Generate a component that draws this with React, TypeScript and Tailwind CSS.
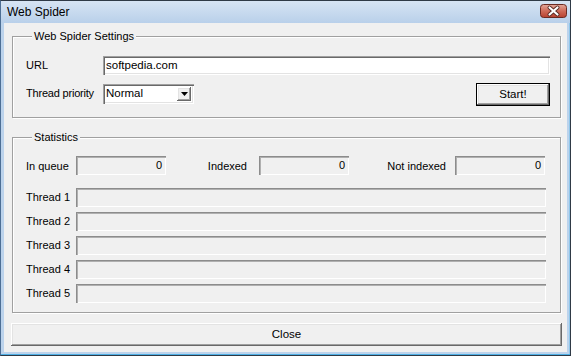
import React from "react";

// classic 3D edges
const raised =
  "shadow-[inset_-1px_-1px_0_#696969,inset_1px_1px_0_#ffffff,inset_-2px_-2px_0_#a0a0a0,inset_2px_2px_0_#e3e3e3]";
const sunken =
  "shadow-[inset_1px_1px_0_#a0a0a0,inset_2px_2px_0_#696969,inset_-1px_-1px_0_#ffffff,inset_-2px_-2px_0_#e3e3e3]";
const statBox =
  "shadow-[inset_1px_1px_0_#8c8c8c,inset_2px_2px_0_#b0b0b0,inset_-1px_-1px_0_#ffffff]";
const group =
  "border border-[#a0a0a0] shadow-[inset_1px_1px_0_#ffffff,1px_1px_0_#ffffff]";

function CloseX() {
  return (
    <svg width="27" height="14" viewBox="0 0 27 14">
      <defs>
        <linearGradient id="cx" x1="0" y1="0" x2="0" y2="1">
          <stop offset="0" stopColor="#e3a99c" />
          <stop offset="0.5" stopColor="#cf6a58" />
          <stop offset="1" stopColor="#b8412f" />
        </linearGradient>
      </defs>
      <rect x="0.5" y="0.5" width="26" height="13" rx="3" fill="url(#cx)" stroke="#6b2a22" />
      <path d="M9.5 3.5 L17.5 10.5 M17.5 3.5 L9.5 10.5" stroke="#5a2a24" strokeWidth="4" strokeLinecap="round" />
      <path d="M9.5 3.5 L17.5 10.5 M17.5 3.5 L9.5 10.5" stroke="#ffffff" strokeWidth="2.2" strokeLinecap="round" />
    </svg>
  );
}

function StatValue({ className }: { className: string }) {
  return (
    <div className={`${statBox} ${className} h-[19px] bg-[#f0f0f0] flex items-center justify-end pr-[4px]`}>
      0
    </div>
  );
}

export default function App() {
  const threads = [1, 2, 3, 4, 5];

  return (
    <div className="w-[572px] h-[357px] bg-white font-['Liberation_Sans',Arial,sans-serif] text-[11px] text-black leading-none">
      <div className="w-[571px] h-[356px] border border-[#2f3a46] border-l-[#4d6f95] flex flex-col">
        {/* title bar */}
        <div className="h-[22px] flex items-center justify-between pl-[6px] pr-[3px] bg-gradient-to-b from-[#d6e4f3] to-[#b9d0ea]">
          <span className="text-[12px]">Web Spider</span>
          <div className="mt-[-2px]">
            <CloseX />
          </div>
        </div>

        {/* frame + client */}
        <div className="flex-1 px-[3px] pb-[3px] bg-[#bcd3ec] shadow-[inset_0_-1px_0_#4fb0e5,inset_-1px_0_0_#8fc6ea]">
          <div className="h-full bg-[#f0f0f0] pl-[8px] pt-[7px]">
            <fieldset className={`${group} w-[549px] pl-[13px] pr-[10px] pb-[11px]`}>
              <legend className="ml-[6px] px-[2px] bg-[#f0f0f0] leading-[13px]">Web Spider Settings</legend>
              <div className="mt-[13px] flex items-center">
                <span className="w-[77px]">URL</span>
                <div className={`${sunken} w-[447px] h-[19px] bg-white flex items-center pl-[3px] text-[11.5px]`}>
                  softpedia.com
                </div>
              </div>
              <div className="mt-[8px] flex items-start">
                <div className="flex items-center h-[21px]">
                  <span className="w-[77px] tracking-[-0.2px]">Thread priority</span>
                  <div className={`${sunken} w-[91px] h-[20px] bg-white flex items-center justify-between pl-[3px] pr-[3px] text-[11.5px]`}>
                    <span>Normal</span>
                    <div className={`${raised} w-[14px] h-[14px] bg-[#f0f0f0] flex items-center justify-center`}>
                      <svg width="7" height="4" viewBox="0 0 7 4">
                        <path d="M0 0 H7 L3.5 4 Z" fill="#000" />
                      </svg>
                    </div>
                  </div>
                </div>
                <button
                  className={`ml-auto w-[74px] h-[23px] border border-black bg-[#f0f0f0] ${raised} flex items-center justify-center text-[11.5px]`}
                >
                  Start!
                </button>
              </div>
            </fieldset>

            <fieldset className={`${group} w-[549px] mt-[13px] pl-[13px] pr-[10px] pb-[9px]`}>
              <legend className="ml-[6px] px-[2px] bg-[#f0f0f0] leading-[13px]">Statistics</legend>
              <div className="mt-[12px] flex items-center">
                <span className="w-[50px] pt-[1px]">In queue</span>
                <StatValue className="w-[90px]" />
                <span className="w-[93px] text-right pr-[12px] pt-[1px]">Indexed</span>
                <StatValue className="w-[90px]" />
                <span className="w-[106px] text-right pr-[9px] pt-[1px]">Not indexed</span>
                <StatValue className="w-[90px]" />
              </div>
              <div className="mt-[13px] flex flex-col gap-[5px]">
                {threads.map((t) => (
                  <div key={t} className="flex items-center">
                    <span className="w-[50px]">Thread {t}</span>
                    <div className={`${statBox} w-[470px] h-[19px] bg-[#f0f0f0]`} />
                  </div>
                ))}
              </div>
            </fieldset>

            <button
              className={`mt-[10px] ml-[-1px] w-[551px] h-[23px] bg-[#f0f0f0] ${raised} flex items-center justify-center text-[11.5px]`}
            >
              Close
            </button>
          </div>
        </div>
      </div>
    </div>
  );
}
